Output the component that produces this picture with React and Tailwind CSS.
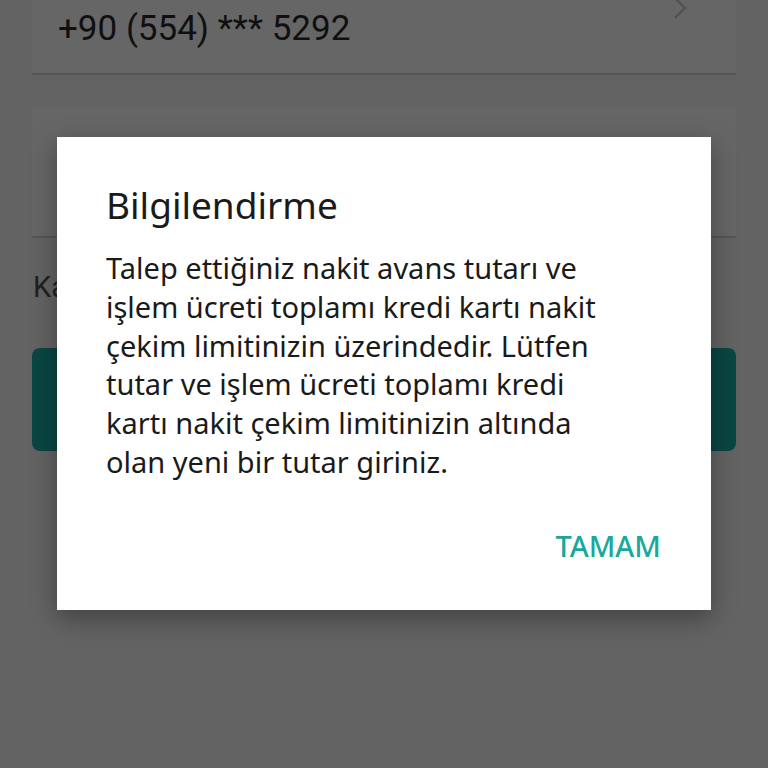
export default function App() {
  const lines = [
    "Talep ettiğiniz nakit avans tutarı ve",
    "işlem ücreti toplamı kredi kartı nakit",
    "çekim limitinizin üzerindedir. Lütfen",
    "tutar ve işlem ücreti toplamı kredi",
    "kartı nakit çekim limitinizin altında",
    "olan yeni bir tutar giriniz.",
  ];
  return (
    <div
      className="relative h-[768px] w-[768px] overflow-hidden bg-[#636363]"
      style={{ fontFamily: "Roboto, 'Noto Sans', sans-serif" }}
    >
      {/* page behind the dimmed overlay */}
      <div className="flex flex-col px-[32px]">
        <div className="relative flex h-[75px] items-center border-b-2 border-[#555555] bg-[#666666] pl-[26px]">
          <span className="mt-[-14px] text-[35px] text-[#101010]">+90 (554) *** 5292</span>
          <svg className="absolute right-[48px] top-[-4px]" width="16" height="28" viewBox="0 0 16 28" fill="none">
            <path d="M3 2 L13 12 L3 22" stroke="#505050" strokeWidth="2" />
          </svg>
        </div>
        <div className="mt-[33px] h-[130px] border-b-2 border-[#555555] bg-[#666666]" />
        <div className="mt-[28px] pl-[1px] text-[29px] text-[#202020]">Kart nakit çekim limiti</div>
        <div className="mt-[38px] h-[103px] rounded-[8px] bg-[#0a4642]" />
      </div>

      {/* dialog */}
      <div
        className="absolute left-[57px] top-[137px] flex h-[473px] w-[654px] flex-col bg-white pl-[49px] pr-[50px] shadow-[0_8px_24px_rgba(0,0,0,0.35)]"
        style={{ fontFamily: "'Noto Sans', Roboto, sans-serif" }}
      >
        <div className="mt-[44px] text-[37px] leading-[48px] text-[#1a1a1a]">Bilgilendirme</div>
        <div className="mt-[20px] text-[29px] leading-[38.8px] text-[#1a1a1a]">
          {lines.map((l) => (
            <div key={l}>{l}</div>
          ))}
        </div>
        <div className="mt-[44px] flex justify-end">
          <span className="text-[29px] font-medium leading-[40px] text-[#1aa89b]">TAMAM</span>
        </div>
      </div>
    </div>
  );
}
